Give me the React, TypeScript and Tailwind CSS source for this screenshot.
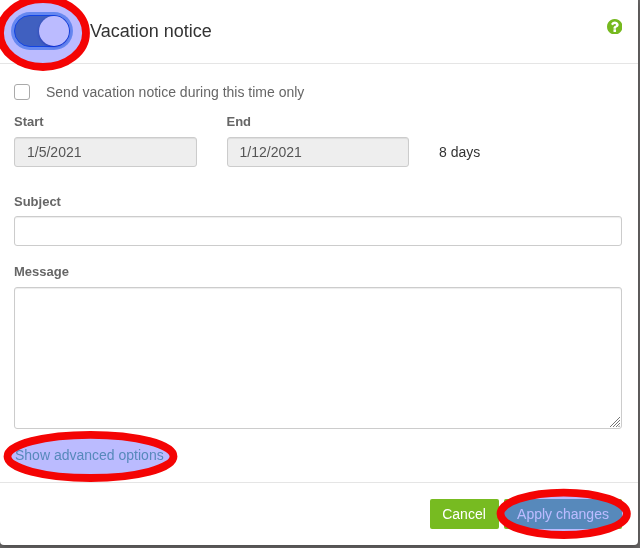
import React from "react";

interface Ring {
  cx: number;
  cy: number;
  rx: number;
  ry: number;
}

const rings: Ring[] = [
  { cx: 43, cy: 33, rx: 43, ry: 34 },
  { cx: 90.5, cy: 456.4, rx: 83, ry: 21.6 },
  { cx: 563.7, cy: 513.8, rx: 63.2, ry: 21.2 },
];

// Blue tint and red rings over the highlighted controls.
// The tint takes two passes so that it also lifts the blue in dark colours.
const Highlights: React.FC = () => (
  <>
    <svg
      className="pointer-events-none absolute inset-0 mix-blend-multiply"
      width="640"
      height="548"
    >
      {rings.map((ring) => (
        <ellipse key={ring.cy} {...ring} fill="#bbbbff" />
      ))}
    </svg>
    <svg
      className="pointer-events-none absolute inset-0 mix-blend-screen"
      width="640"
      height="548"
    >
      {rings.map((ring) => (
        <ellipse key={ring.cy} {...ring} fill="#0000b1" />
      ))}
    </svg>
    <svg
      className="pointer-events-none absolute inset-0"
      width="640"
      height="548"
    >
      {rings.map((ring) => (
        <ellipse
          key={ring.cy}
          {...ring}
          fill="none"
          stroke="#f40404"
          strokeWidth={7.8}
        />
      ))}
    </svg>
  </>
);

const HelpIcon: React.FC = () => (
  <svg
    className="mt-[18.5px] h-[15.5px] w-[15.5px]"
    viewBox="128 128 1536 1536"
    fill="#76b91f"
  >
    <path d="M1024 1376v-192q0-14-9-23t-23-9h-192q-14 0-23 9t-9 23v192q0 14 9 23t23 9h192q14 0 23-9t9-23zm256-672q0-88-55.5-163t-138.5-116-170-41q-243 0-371 213-15 24 8 42l132 100q7 6 19 6 16 0 25-12 53-68 86-92 34-24 86-24 48 0 85.5 26t37.5 59q0 38-20 61t-68 45q-63 28-115.5 86.5t-52.5 125.5v36q0 14 9 23t23 9h192q14 0 23-9t9-23q0-19 21.5-49.5t54.5-49.5q32-18 49-28.5t46-35 44.5-48 28-60.5 12.5-81zm384 192q0 209-103 385.5t-279.5 279.5-385.5 103-385.5-103-279.5-279.5-103-385.5 103-385.5 279.5-279.5 385.5-103 385.5 103 279.5 279.5 103 385.5z" />
  </svg>
);

const DateField: React.FC<{ label: string; value: string }> = ({
  label,
  value,
}) => (
  <div className="w-[182.5px]">
    <label className="block text-[13px] leading-5 font-bold text-[#666]">
      {label}
    </label>
    <input
      className="mt-[5px] block h-[30px] w-full rounded-[3px] border border-[#ccc] bg-[#eee] px-3 text-[#555] shadow-[inset_0_1px_1px_rgba(0,0,0,0.075)]"
      value={value}
      disabled
      readOnly
    />
  </div>
);

export default function App() {
  return (
    <div className="relative h-[548px] w-[640px] overflow-hidden bg-[#696767] font-['Liberation_Sans',Arial,sans-serif] text-sm leading-5 text-[#333]">
      <div className="flex h-[545px] w-[638px] flex-col rounded-b-[4px] bg-white shadow-[0_2px_6px_rgba(0,0,0,0.3)]">
        <header className="flex h-16 items-start justify-between border-b border-[#e5e5e5] pr-4 pl-[11px]">
          <div className="flex items-start">
            <span className="mt-3 rounded-full bg-[#8bb9ce] p-[3px]">
              <span className="flex h-8 w-14 justify-end rounded-full border border-[#175da7] bg-[#578331]">
                <span className="h-[30px] w-[30px] rounded-full bg-white shadow-[0_1px_3px_rgba(0,0,0,0.4)]" />
              </span>
            </span>
            <h1 className="mt-[19px] ml-[17px] text-lg leading-6">
              Vacation notice
            </h1>
          </div>
          <HelpIcon />
        </header>

        <main className="h-[418px] pt-[18px] pr-4 pl-[14px]">
          <label className="flex items-center text-[#666]">
            <span className="h-4 w-4 rounded-[3px] border border-[#aaa] bg-white" />
            <span className="ml-4">Send vacation notice during this time only</span>
          </label>
          <div className="mt-[10px] flex gap-[30px]">
            <DateField label="Start" value="1/5/2021" />
            <DateField label="End" value="1/12/2021" />
            <span className="mt-[30px]">8 days</span>
          </div>
          <label className="mt-[25px] block text-[13px] font-bold text-[#666]">
            Subject
          </label>
          <input className="mt-1 block h-[30px] w-full rounded-[3px] border border-[#ccc] shadow-[inset_0_1px_1px_rgba(0,0,0,0.075)]" />
          <label className="mt-4 block text-[13px] font-bold text-[#666]">
            Message
          </label>
          <div className="relative mt-[5px]">
            <textarea className="block h-[142px] w-full resize-none rounded-[3px] border border-[#ccc] shadow-[inset_0_1px_1px_rgba(0,0,0,0.075)]" />
            {/* resize grip */}
            <svg
              className="absolute right-[2px] bottom-[2px]"
              width="10"
              height="10"
              fill="none"
              stroke="#666"
              strokeWidth="0.9"
            >
              <path d="M0 10 10 0M3 10 10 3M6 10 10 6M8.5 10 10 8.5" />
            </svg>
          </div>
          <a className="mt-4 ml-px block text-[#76bb21]">
            Show advanced options
          </a>
        </main>

        <footer className="flex flex-1 items-start justify-end gap-[5px] border-t border-[#e5e5e5] pt-4 pr-4 text-white">
          <button className="h-[30px] w-[69px] rounded-[2px] bg-[#77bb21] pr-px">
            Cancel
          </button>
          <button className="h-[30px] w-[118px] rounded-[2px] bg-[#77bb21]">
            Apply changes
          </button>
        </footer>
      </div>

      <Highlights />
    </div>
  );
}
